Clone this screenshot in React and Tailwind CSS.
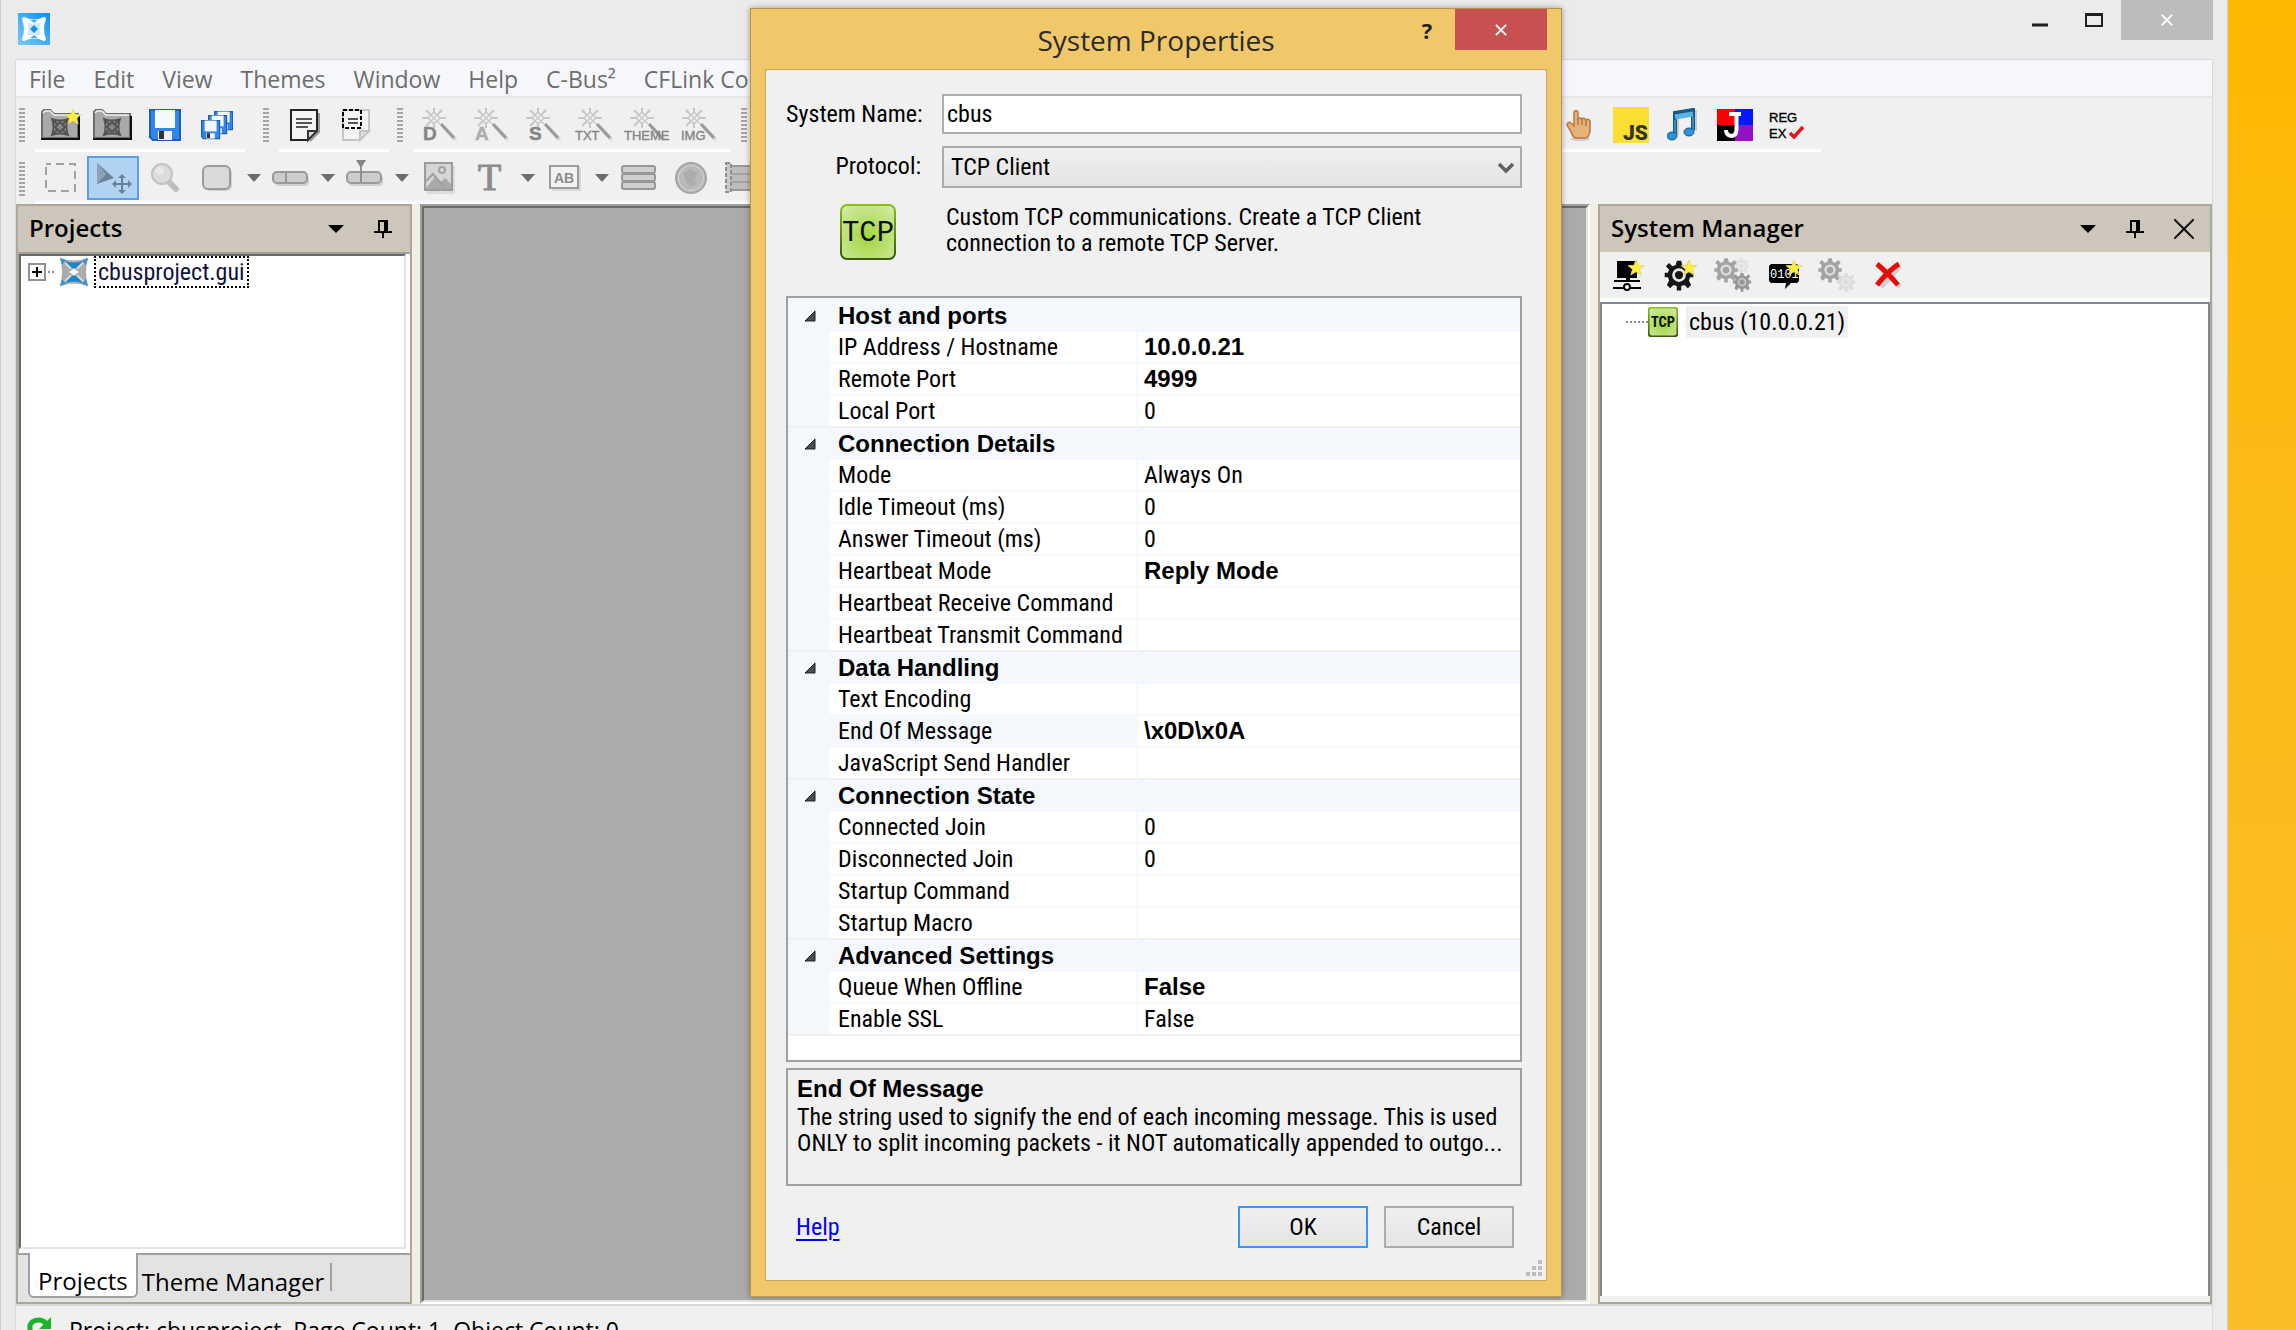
import React, { useState } from "react";

const STAR = "M0 -8 L2.2 -2.6 L8 -2.4 L3.5 1.3 L5.2 7 L0 3.8 L-5.2 7 L-3.5 1.3 L-8 -2.4 L-2.2 -2.6 Z";

const SECTIONS = [
  {
    title: "Host and ports",
    rows: [
      { name: "IP Address / Hostname", value: "10.0.0.21", changed: true },
      { name: "Remote Port", value: "4999", changed: true },
      { name: "Local Port", value: "0" },
    ],
  },
  {
    title: "Connection Details",
    rows: [
      { name: "Mode", value: "Always On" },
      { name: "Idle Timeout (ms)", value: "0" },
      { name: "Answer Timeout (ms)", value: "0" },
      { name: "Heartbeat Mode", value: "Reply Mode", changed: true },
      { name: "Heartbeat Receive Command", value: "" },
      { name: "Heartbeat Transmit Command", value: "" },
    ],
  },
  {
    title: "Data Handling",
    rows: [
      { name: "Text Encoding", value: "" },
      { name: "End Of Message", value: "\\x0D\\x0A", changed: true, selected: true },
      { name: "JavaScript Send Handler", value: "" },
    ],
  },
  {
    title: "Connection State",
    rows: [
      { name: "Connected Join", value: "0" },
      { name: "Disconnected Join", value: "0" },
      { name: "Startup Command", value: "" },
      { name: "Startup Macro", value: "" },
    ],
  },
  {
    title: "Advanced Settings",
    rows: [
      { name: "Queue When Offline", value: "False", changed: true },
      { name: "Enable SSL", value: "False" },
    ],
  },
];

/* ── Icons ── */

const Star = ({ x, y }) => <path d={STAR} transform={`translate(${x} ${y})`} fill="#fdf03c" stroke="#e0d66a" strokeWidth="0.8" />;

const Knot = () => (
  <g fill="none" stroke="#515151" strokeWidth="1.8">
    <path d="M1 1 Q9 4 17 1 Q14 9 17 17 Q9 14 1 17 Q4 9 1 1 Z" fill="#868686" />
    <path d="M2 2 L6 6 M12 12 L16 16 M16 2 L12 6 M6 12 L2 16" />
    <path d="M9 4 L14 9 L9 14 L4 9 Z" />
  </g>
);

const AppLogo = () => (
  <svg viewBox="0 0 32 32" className="size-8">
    <defs>
      <linearGradient id="logoBg" x1="1" y1="0" x2="0" y2="1">
        <stop offset="0" stopColor="#0a8ff5" />
        <stop offset="1" stopColor="#7cc8fb" />
      </linearGradient>
    </defs>
    <rect width="32" height="32" fill="url(#logoBg)" />
    <path d="M6 6 Q16 11 26 6 Q22 16 26 26 Q16 21 6 26 Q10 16 6 6 Z" fill="#cfeaff" stroke="#fff" strokeWidth="4" strokeLinejoin="round" />
    <path d="M12 7 L16 10 L20 7 Z M12 25 L16 22 L20 25 Z" fill="#4db0f7" />
    <path d="M16 12 L20 16 L16 20 L12 16 Z" fill="#1b8fe8" />
  </svg>
);

const ProjectLogo = () => (
  <svg viewBox="0 0 28 28" className="size-7 shrink-0">
    <path d="M0 0 Q14 5 28 0 Q24 14 28 28 Q14 23 0 28 Q4 14 0 0 Z" fill="#a9abad" />
    <path d="M5 3 Q14 6 23 3 L15 11 H13 Z M5 25 Q14 22 23 25 L15 17 H13 Z" fill="#1c86d1" />
    <path d="M0 0 L6 2 L2 7 Z M28 0 L22 2 L26 7 Z M0 28 L6 26 L2 21 Z M28 28 L22 26 L26 21 Z" fill="#3a95d6" />
    <path d="M5 5 L11 11 M23 5 L17 11 M5 23 L11 17 M23 23 L17 17" stroke="#dfe7ee" strokeWidth="1.5" />
    <path d="M14 10 L16 12 L19 14 L16 16 L14 18 L12 16 L9 14 L12 12 Z" fill="#fff" />
  </svg>
);

const FolderIcon = ({ star }) => (
  <svg viewBox="0 0 40 34" className="h-[34px] w-10">
    <path d="M1 30 V4 L3 2 H9 L13 6 H37 V30 Z" fill="#a9a9a9" stroke="#6c6c6c" strokeWidth="2" />
    <path d="M2 5 L4 3 H9 L13 7 H36" fill="none" stroke="#f3f3f3" strokeWidth="1.5" />
    <path d="M0 31 H39 M38 8 V31" stroke="#111" strokeWidth="2" />
    <g transform="translate(10 10)">
      <Knot />
    </g>
    {star && <Star x={32} y={9} />}
  </svg>
);

const Floppy = ({ x = 0, y = 0, s = 1 }) => (
  <g transform={`translate(${x} ${y}) scale(${s})`}>
    <path d="M1 1 H31 V31 H4 L1 28 Z" fill="#2e86ee" stroke="#1f5fae" strokeWidth="2" />
    <rect x="6" y="1" width="20" height="18" fill="#f4f8fd" />
    <rect x="9" y="22" width="14" height="9" fill="#f2f2f2" />
    <rect x="10" y="22" width="5" height="8" fill="#333" />
  </g>
);

const SaveIcon = () => (
  <svg viewBox="0 0 32 32" className="size-8">
    <Floppy />
  </svg>
);

const SaveAllIcon = () => (
  <svg viewBox="0 0 32 32" className="size-8">
    <Floppy x={13} y={2} s={0.6} />
    <Floppy x={7} y={6} s={0.6} />
    <Floppy x={0} y={11} s={0.6} />
  </svg>
);

const PageIcon = ({ dashed }) => (
  <svg viewBox="0 0 34 36" className="h-9 w-[34px]">
    <path
      d="M3 3 H29 V24 L20 33 H3 Z"
      fill="#f4f4f4"
      stroke={dashed ? "#c4c4c4" : "#222"}
      strokeWidth="2"
    />
    <path d="M29 24 H20 V33 Z" fill="#ddd" stroke={dashed ? "#c4c4c4" : "#333"} strokeWidth="2" />
    {!dashed && <path d="M31 6 V25 L22 34" fill="none" stroke="#999" strokeWidth="2" />}
    <path d={dashed ? "M8 12 H18 M8 16 H18" : "M8 12 H24 M8 16 H24 M8 20 H20"} stroke="#555" strokeWidth="2" />
    {dashed && <rect x="3" y="3" width="18" height="18" fill="none" stroke="#000" strokeWidth="2" strokeDasharray="4 2" />}
  </svg>
);

const WandIcon = ({ label, x, big, light }) => (
  <svg viewBox="0 0 52 40" className="h-10 w-[52px]">
    <path
      d="M21 3 V9 M21 17 V23 M9 13 H15 M27 13 H33 M13 5 L17 9 M25 9 L29 5 M13 21 L17 17"
      stroke="#c6c6c6"
      strokeWidth="2"
    />
    <path d="M15 7 L27 19 M27 7 L15 19 M21 7 L27 13 L21 19 L15 13 Z" fill="none" stroke="#c9c9c9" strokeWidth="1.5" />
    <path d="M30 21 L43 35" stroke="#dcdcdc" strokeWidth="4" />
    <path d="M28 19 L41 33" stroke="#999" strokeWidth="3" />
    <text
      x={x}
      y="35"
      fontFamily="Liberation Sans, sans-serif"
      fontSize={big ? 19 : 13}
      fontWeight={big ? 700 : 400}
      fill={light ? "#adadad" : "#858585"}
      stroke={light ? "#adadad" : "#858585"}
      strokeWidth="0.4"
    >
      {label}
    </text>
  </svg>
);

const HandIcon = () => (
  <svg viewBox="0 0 26 34" className="h-[34px] w-[26px]">
    <ellipse cx="14" cy="31" rx="10" ry="2" fill="#cfcfcf" />
    <path
      d="M8 18 V4 Q10 1 12 4 V11 Q14 9 16 11 Q18 9 20 12 Q22 10 24 13 V23 Q23 30 19 30 H9 Q6 28 5 24 L1 17 Q2 13 5 15 Z"
      fill="#e6b27a"
      stroke="#b5783f"
      strokeWidth="1.5"
    />
    <path d="M12 11 V17 M16 11 V17 M20 12 V18" stroke="#b5783f" strokeWidth="1.5" />
  </svg>
);

const JsIcon = () => (
  <svg viewBox="0 0 36 36" className="size-9 overflow-visible">
    <rect width="36" height="36" fill="#fbdf30" />
    <text x="10" y="33" fontFamily="Roboto, sans-serif" fontSize="21" fontWeight="900" fill="#33332d">
      JS
    </text>
  </svg>
);

const MusicIcon = () => (
  <svg viewBox="0 0 32 34" className="h-[34px] w-8">
    <path d="M10 27 V7 L28 4 V23" fill="none" stroke="#c9c9c9" strokeWidth="4" />
    <path d="M8 26 V5 L26 2 V22" fill="none" stroke="#15598c" strokeWidth="4" />
    <path d="M8 9 L26 6" stroke="#58b2e4" strokeWidth="5" />
    <path d="M8 26 V12 M26 22 V9" stroke="#3d9bd4" strokeWidth="1.5" />
    <ellipse cx="5" cy="28" rx="5" ry="4" fill="#2b93d6" stroke="#14578a" />
    <ellipse cx="22" cy="24" rx="5" ry="4" fill="#2b93d6" stroke="#14578a" />
  </svg>
);

const JIcon = () => (
  <svg viewBox="0 0 36 32" className="h-8 w-9">
    <rect width="18" height="16" fill="#fb0006" />
    <rect x="18" width="18" height="16" fill="#0518fb" />
    <rect y="16" width="18" height="16" fill="#000" />
    <rect x="18" y="16" width="18" height="16" fill="#9312c4" />
    <path d="M12 5 H24 M19.500 5 V21 Q19 27 14 27 Q9 26 9 21" fill="none" stroke="#fff" strokeWidth="4" />
  </svg>
);

const RegexIcon = () => (
  <svg viewBox="0 0 38 34" className="h-[34px] w-[38px]">
    <g fontFamily="Liberation Sans, sans-serif" fontSize="13" fill="#000" stroke="#000" strokeWidth="0.4">
      <text x="1" y="14">REG</text>
      <text x="1" y="30">EX</text>
    </g>
    <path d="M22 25 L26 29 L35 19" fill="none" stroke="#e8141c" strokeWidth="3.500" />
  </svg>
);

const MarqueeIcon = () => (
  <svg viewBox="0 0 32 30" className="h-[30px] w-8">
    <rect x="1" y="1" width="29" height="27" fill="none" stroke="#a2a2a2" strokeWidth="2" strokeDasharray="8 5" strokeDashoffset="3" />
  </svg>
);

const MoveIcon = () => (
  <svg viewBox="0 0 38 34" className="h-[34px] w-[38px]">
    <path d="M3 2 L20 17 L3 23 Z" fill="#6f8297" />
    <path d="M3 2 L12 13 L3 23 Z" fill="#8fa3b8" />
    <path d="M28 15 V31 M20 23 H36" stroke="#6b8098" strokeWidth="2" />
    <path d="M28 13 L24 17 H32 Z M28 33 L24 29 H32 Z M18 23 L22 19 V27 Z M38 23 L34 19 V27 Z" fill="#6b8098" />
  </svg>
);

const ZoomIcon = () => (
  <svg viewBox="0 0 32 32" className="size-8">
    <path d="M19 19 L27 27" stroke="#bdbdbd" strokeWidth="6" strokeLinecap="round" />
    <circle cx="13" cy="12" r="10" fill="#dcdcdc" stroke="#c2c2c2" strokeWidth="2" />
    <circle cx="11" cy="9" r="4" fill="#e8e8e8" />
  </svg>
);

const ShapeIcon = () => (
  <svg viewBox="0 0 34 30" className="h-[30px] w-[34px]">
    <rect x="5" y="5" width="27" height="23" rx="5" fill="#d0d0d0" />
    <rect x="3" y="3" width="27" height="23" rx="5" fill="#d9d9d9" stroke="#9b9b9b" strokeWidth="2" />
  </svg>
);

const SliderIcon = ({ pointer }) => (
  <svg viewBox="0 0 40 36" className="h-9 w-10">
    <rect x="4" y="15" width="34" height="11" rx="4" fill="#cfcfcf" />
    <rect x="2" y="12" width="34" height="11" rx="4" fill="#cccccc" stroke="#9a9a9a" strokeWidth="2" />
    {!pointer && <path d="M15 13 V22" stroke="#9a9a9a" strokeWidth="2" />}
    {pointer && <path d="M16 7 V22" stroke="#909090" strokeWidth="2" />}
    {pointer && <path d="M11 0 H21 L16 8 Z" fill="#858585" />}
  </svg>
);

const ImageIcon = () => (
  <svg viewBox="0 0 32 32" className="size-8">
    <rect x="4" y="4" width="28" height="28" fill="#dcdcdc" />
    <rect x="2" y="1" width="27" height="27" fill="#d6d6d6" stroke="#9c9c9c" strokeWidth="2" />
    <circle cx="19" cy="8" r="3" fill="none" stroke="#a2a2a2" strokeWidth="2" />
    <path d="M3 26 L12 15 L18 20 L22 16 L28 22 V27 H3 Z" fill="#aaaaaa" />
    <path d="M3 19 L10 12 L22 26" fill="none" stroke="#a0a0a0" strokeWidth="2" />
  </svg>
);

const TextIcon = () => (
  <svg viewBox="0 0 32 32" className="size-8 overflow-visible">
    <text x="3" y="28" fontFamily="Liberation Serif, serif" fontSize="38" fill="#8c8c8c" stroke="#8c8c8c" strokeWidth="1">
      T
    </text>
  </svg>
);

const InputIcon = () => (
  <svg viewBox="0 0 34 30" className="h-[30px] w-[34px]">
    <rect x="4" y="4" width="29" height="24" fill="#d8d8d8" />
    <rect x="2" y="3" width="28" height="22" fill="#f2f2f2" stroke="#9c9c9c" strokeWidth="2" />
    <text x="6" y="20" fontFamily="Liberation Sans, sans-serif" fontSize="14" fontWeight="700" fill="#8b8b8b">
      AB
    </text>
  </svg>
);

const ListIcon = () => (
  <svg viewBox="0 0 36 28" className="h-7 w-9">
    <g fill="#cfcfcf" stroke="#979797" strokeWidth="2">
      <rect x="1" y="2" width="33" height="7" rx="2" />
      <rect x="1" y="10" width="33" height="7" rx="2" />
      <rect x="1" y="18" width="33" height="7" rx="2" />
    </g>
  </svg>
);

const GlobeIcon = () => (
  <svg viewBox="0 0 34 34" className="size-[34px]">
    <circle cx="17" cy="17" r="15" fill="#bcbcbc" stroke="#a5a5a5" strokeWidth="2" />
    <circle cx="17" cy="17" r="12.500" fill="#bababa" stroke="#d3d3d3" />
    <path d="M9 12 L17 8 L24 13 L20 18 L23 23 L15 26 L12 19 Z" fill="#adadad" />
  </svg>
);

const FilmIcon = () => (
  <svg viewBox="0 0 36 32" className="h-8 w-9">
    <rect x="3" y="4" width="33" height="24" fill="#bdbdbd" stroke="#999" strokeWidth="2" />
    <path d="M4 12 H36 M4 20 H36" stroke="#a4a4a4" strokeWidth="2" />
    <rect x="1" y="1" width="5" height="29" fill="#c9c9c9" stroke="#8f8f8f" strokeWidth="2" strokeDasharray="4 2" />
  </svg>
);

const PinIcon = () => (
  <svg viewBox="0 0 18 18" className="h-[18px] w-[18px]">
    <path d="M5 11 V1 H13 V11 M11 1 V11 M0 12 H18 M9 12 V18" fill="none" stroke="#000" strokeWidth="2" />
  </svg>
);

const GEAR =
  "M-2 -13 H2 L3 -9 L6 -8 L9 -11 L12 -8 L9 -5 L10 -2 H13 V2 H10 L9 5 L11 9 L8 12 L5 9 L2 10 V14 H-2 V10 L-5 9 L-8 12 L-11 9 L-9 5 L-10 2 H-13 V-2 H-10 L-9 -5 L-12 -8 L-9 -11 L-6 -8 L-3 -9 Z";

const Gear = ({ x, y, s, color, hole }) => (
  <g transform={`translate(${x} ${y}) scale(${s})`}>
    <path d={GEAR} fill={color} />
    <circle r="5" fill={color} stroke={hole} strokeWidth="2.500" />
  </g>
);

const NewSystemIcon = () => (
  <svg viewBox="0 0 36 34" className="h-[34px] w-9">
    <path d="M6 3 H26 V20 H6 Z M15 20 H19 V24 H15 Z" fill="#000" />
    <path d="M3 23 H29 M2 30 H30" stroke="#000" strokeWidth="2" />
    <circle cx="16" cy="29" r="3" fill="#fff" stroke="#000" strokeWidth="2" />
    <Star x={25} y={10} />
  </svg>
);

const NewGearIcon = () => (
  <svg viewBox="0 0 36 34" className="h-[34px] w-9">
    <Gear x={16} y={17} s={1.1} color="#161616" hole="#e8e8e8" />
    <Star x={26} y={10} />
  </svg>
);

const GearsIcon = ({ faded }) => (
  <svg viewBox="0 0 40 34" className="h-[34px] w-10">
    {!faded && <Gear x={28} y={8} s={0.6} color="#e0e0e0" hole="#ececec" />}
    <Gear x={13} y={12} s={0.9} color="#a3a3a3" hole="#e0e0e0" />
    <Gear x={29} y={24} s={0.7} color={faded ? "#dcdcdc" : "#979797"} hole={faded ? "#e8e8e8" : "#c4c4c4"} />
  </svg>
);

const CommandIcon = () => (
  <svg viewBox="0 0 36 34" className="h-[34px] w-9">
    <path d="M4 6 H30 L32 8 V23 L30 25 H24 L18 31 L19 25 H4 L2 23 V8 Z" fill="#000" />
    <text x="3" y="20" fontFamily="Liberation Mono, monospace" fontSize="12" fill="#fff">
      0101
    </text>
    <Star x={27} y={10} />
  </svg>
);

const DeleteIcon = () => (
  <svg viewBox="0 0 32 30" className="h-[30px] w-8">
    <path d="M6 7 L27 27 M27 6 L8 27" stroke="#cfcfcf" strokeWidth="5" />
    <path d="M4 4 Q14 12 25 25 M26 4 Q16 10 4 25" fill="none" stroke="#e50b0b" strokeWidth="5" />
  </svg>
);

const TcpIcon = ({ large }) => (
  <svg viewBox="0 0 56 56" className={large ? "size-14" : "size-[30px] shrink-0"}>
    <defs>
      <radialGradient id="tcpGreen" cx="0.5" cy="0.6" r="0.7">
        <stop offset="0" stopColor="#a3d63f" />
        <stop offset="1" stopColor="#cfeaa0" />
      </radialGradient>
      <linearGradient id="tcpEdge" x1="0" y1="0" x2="0" y2="1">
        <stop offset="0" stopColor="#8bbf18" />
        <stop offset="1" stopColor="#3d5a12" />
      </linearGradient>
    </defs>
    <rect x="1" y="1" width="54" height="54" rx="6" fill="url(#tcpGreen)" stroke="url(#tcpEdge)" strokeWidth={large ? 2 : 4} />
    <text
      x="28"
      y="37"
      textAnchor="middle"
      fontFamily={large ? "Liberation Mono, monospace" : "Roboto Condensed, Liberation Sans, sans-serif"}
      fontSize={large ? 29 : 27}
      fontWeight={large ? 400 : 700}
      fill="#0c1204"
    >
      TCP
    </text>
  </svg>
);

const CloseGlyph = () => (
  <svg viewBox="0 0 14 14" className="size-3">
    <path d="M1 1 L13 13 M13 1 L1 13" stroke="currentColor" strokeWidth="2.200" />
  </svg>
);

/* ── Toolbar pieces ── */

const Grip = () => (
  <div
    aria-hidden="true"
    className="mt-2.5 mr-2.5 h-[34px] w-1.5 shrink-0 bg-[repeating-linear-gradient(to_bottom,#a5a5a5_0_2px,transparent_2px_4px)]"
  />
);

const Strip = ({ className = "", children }) => (
  <div className={`flex h-full shrink-0 border-b-2 border-white shadow-[inset_0_-2px_0_#f3f6fb] ${className}`}>{children}</div>
);

const ToolButton = ({ label, compact, children }) => (
  <button
    type="button"
    aria-label={label}
    className={`flex w-[52px] shrink-0 items-center justify-center ${compact ? "h-[46px]" : "h-[50px] pt-1"}`}
  >
    {children}
  </button>
);

const EditButton = ({ label, selected, children }) => (
  <button
    type="button"
    aria-label={label}
    className={`mt-1 flex h-11 w-[52px] shrink-0 items-center justify-center ${
      selected ? "border-2 border-[#5c9fe4] bg-[#b1d2f3]" : ""
    }`}
  >
    {children}
  </button>
);

const DropArrow = ({ label }) => (
  <button type="button" aria-label={label} className="mt-1 flex h-11 w-[22px] shrink-0 items-center justify-center">
    <svg viewBox="0 0 14 8" className="h-2 w-3.5">
      <path d="M0 0 H14 L7 8 Z" fill="#6b6b70" />
    </svg>
  </button>
);

const PanelHeader = ({ title, closable }) => (
  <div className={`flex h-[46px] shrink-0 items-center bg-[#cdc6ba] pl-[11px] ${closable ? "pr-4" : "pr-[18px]"}`}>
    <h2 className="flex-1 pb-0.5 font-['Open_Sans',sans-serif] text-[24px] leading-[32px] font-semibold text-black">{title}</h2>
    <div className="flex items-center gap-[30px]">
      <button type="button" aria-label={`${title} menu`}>
        <svg viewBox="0 0 16 8" className="h-2 w-4">
          <path d="M0 0 H16 L8 8 Z" fill="#000" />
        </svg>
      </button>
      <button type="button" aria-label={`Pin ${title}`}>
        <PinIcon />
      </button>
      {closable && (
        <button type="button" aria-label={`Close ${title}`}>
          <svg viewBox="0 0 20 20" className="size-5">
            <path d="M0 0 L20 20 M20 0 L0 20" stroke="#111" strokeWidth="2" />
          </svg>
        </button>
      )}
    </div>
  </div>
);

const MenuBar = () => (
  <nav className="flex h-[38px] shrink-0 items-center gap-7 border-b-2 border-[#e6e7e9] bg-[#f5f7fa] pt-0.5 pl-[13px] font-['Open_Sans',sans-serif] text-[23px] leading-[32px] whitespace-nowrap text-[#6d6d6d]">
    {["File", "Edit", "View", "Themes", "Window", "Help", "C-Bus²", "CFLink Commands"].map((item) => (
      <button key={item} type="button">
        {item}
      </button>
    ))}
  </nav>
);

const Toolbars = () => (
  <div className="shrink-0 pl-[3px]">
    <div className="flex h-[54px]">
      <Grip />
      <Strip className="mr-[18px] w-[210px]">
        <ToolButton label="New project"><FolderIcon star /></ToolButton>
        <ToolButton label="Open project"><FolderIcon /></ToolButton>
        <ToolButton label="Save"><SaveIcon /></ToolButton>
        <ToolButton label="Save all"><SaveAllIcon /></ToolButton>
      </Strip>
      <Grip />
      <Strip className="mr-2 w-[110px]">
        <ToolButton label="New page"><PageIcon /></ToolButton>
        <ToolButton label="New subpage"><PageIcon dashed /></ToolButton>
      </Strip>
      <Grip />
      <Strip className="mr-2.5 w-[318px]">
        <ToolButton label="Digital join wand"><WandIcon label="D" x={10} big /></ToolButton>
        <ToolButton label="Analog join wand"><WandIcon label="A" x={10} big light /></ToolButton>
        <ToolButton label="Serial join wand"><WandIcon label="S" x={12} big /></ToolButton>
        <ToolButton label="Text wand"><WandIcon label="TXT" x={6} /></ToolButton>
        <ToolButton label="Theme wand"><WandIcon label="THEME" x={3} /></ToolButton>
        <ToolButton label="Image wand"><WandIcon label="IMG" x={8} /></ToolButton>
      </Strip>
      <Grip />
      <Strip className="w-[1064px] justify-end pr-2">
        <ToolButton label="Gestures"><HandIcon /></ToolButton>
        <ToolButton label="Scripts"><JsIcon /></ToolButton>
        <ToolButton label="Sounds"><MusicIcon /></ToolButton>
        <ToolButton label="Joins"><JIcon /></ToolButton>
        <ToolButton label="Regex tester"><RegexIcon /></ToolButton>
      </Strip>
    </div>
    <div className="flex h-[52px]">
      <Grip />
      <Strip className="w-[1064px]">
        <EditButton label="Select"><MarqueeIcon /></EditButton>
        <EditButton label="Move" selected><MoveIcon /></EditButton>
        <EditButton label="Zoom"><ZoomIcon /></EditButton>
        <EditButton label="Button"><ShapeIcon /></EditButton>
        <DropArrow label="Button options" />
        <EditButton label="Gauge"><SliderIcon /></EditButton>
        <DropArrow label="Gauge options" />
        <EditButton label="Slider"><SliderIcon pointer /></EditButton>
        <DropArrow label="Slider options" />
        <EditButton label="Image"><ImageIcon /></EditButton>
        <EditButton label="Text"><TextIcon /></EditButton>
        <DropArrow label="Text options" />
        <EditButton label="Input field"><InputIcon /></EditButton>
        <DropArrow label="Input field options" />
        <EditButton label="List"><ListIcon /></EditButton>
        <EditButton label="Web"><GlobeIcon /></EditButton>
        <EditButton label="Video"><FilmIcon /></EditButton>
      </Strip>
    </div>
  </div>
);

/* ── Side panels ── */

const ProjectsPanel = () => (
  <section className="flex w-[396px] shrink-0 flex-col border-2 border-[#aca899] bg-white">
    <PanelHeader title="Projects" />
    <div className="flex-1 border-t-2 border-l border-[#a0a0a0] pr-1 pb-1">
      <div className="h-full border-2 border-t-[#696969] border-r-[#e3e3e3] border-b-[#e3e3e3] border-l-[#696969] pl-[7px]">
        <div className="flex h-8 items-center">
          <button type="button" aria-label="Expand cbusproject.gui" className="shrink-0">
            <svg viewBox="0 0 18 18" className="size-[18px]">
              <rect x="1" y="1" width="16" height="16" fill="#fff" stroke="#919191" strokeWidth="2" />
              <path d="M4 9 H14 M9 4 V14" stroke="#000" strokeWidth="2" />
            </svg>
          </button>
          <div className="mr-1.5 ml-0.5 w-1.5 border-t-2 border-dotted border-[#8c8c8c]" />
          <ProjectLogo />
          <span className="ml-1.5 h-8 border-2 border-dotted border-black px-0.5 font-['Roboto_Condensed','Liberation_Sans',sans-serif] text-[24px] leading-[28px] text-[#101040]">
            cbusproject.gui
          </span>
        </div>
      </div>
    </div>
    <div className="flex h-[49px] shrink-0 items-start border-t-2 border-[#a0a0a0] bg-[#e3e3e3] pl-2.5 font-['Open_Sans',sans-serif] text-[24px] leading-[32px] text-black">
      <button
        type="button"
        className="-mt-0.5 h-[45px] rounded-b-md border-x-2 border-b-2 border-[#a0a0a0] bg-white px-2 pt-3"
      >
        Projects
      </button>
      <button type="button" className="h-[43px] px-1 pt-2.5 whitespace-nowrap">
        Theme Manager
      </button>
      <div className="mt-2 ml-0.5 h-7 w-0.5 bg-[#a0a0a0]" />
    </div>
  </section>
);

const SystemManagerPanel = () => (
  <section className="flex w-[614px] shrink-0 flex-col border-2 border-[#aca899] bg-[#f0f0f0]">
    <PanelHeader title="System Manager" closable />
    <div className="flex h-[50px] shrink-0 items-start border-b-4 border-[#fafbfe] pl-[3px]">
      <ToolButton compact label="Add system"><NewSystemIcon /></ToolButton>
      <ToolButton compact label="Add command"><NewGearIcon /></ToolButton>
      <ToolButton compact label="Duplicate commands"><GearsIcon /></ToolButton>
      <ToolButton compact label="Add feedback"><CommandIcon /></ToolButton>
      <ToolButton compact label="Add macro"><GearsIcon faded /></ToolButton>
      <ToolButton compact label="Delete"><DeleteIcon /></ToolButton>
    </div>
    <div className="mb-1.5 flex-1 border-x-2 border-t-2 border-[#828790] bg-white pt-0.5">
      <div className="flex items-center pl-6">
        <div className="w-[22px] border-t-2 border-dotted border-[#8c8c8c]" />
        <TcpIcon />
        <span className="ml-2 h-8 bg-[#f0f0f0] px-[3px] font-['Roboto_Condensed','Liberation_Sans',sans-serif] text-[24px] leading-[32px] text-black">
          cbus (10.0.0.21)
        </span>
      </div>
    </div>
  </section>
);

/* ── Dialog ── */

const PropertyGrid = () => (
  <div className="h-[766px] border-2 border-[#a0a0a0] bg-white">
    <table className="w-full table-fixed border-separate border-spacing-0 border-t-2 border-[#f4f7fc] text-left">
      <colgroup>
        <col className="w-[42px]" />
        <col className="w-[308px]" />
        <col />
      </colgroup>
      {SECTIONS.map((section) => (
        <tbody key={section.title}>
          <tr className="h-8 bg-[#f4f7fc]">
            <td className="p-0 pl-4">
              <button type="button" aria-label={`Collapse ${section.title}`} className="block">
                <svg viewBox="0 0 12 12" className="size-3">
                  <path d="M11 1 V11 H1 Z" fill="#4d4d4d" stroke="#222" />
                </svg>
              </button>
            </td>
            <th colSpan={2} className="p-0 pl-2 font-['Liberation_Sans',sans-serif] text-[24px] leading-[30px] font-bold">
              {section.title}
            </th>
          </tr>
          {section.rows.map((row, i) => {
            const edge = i === section.rows.length - 1 ? "border-b-[#f0f0f0]" : "border-b-[#f4f7fc]";
            return (
              <tr key={row.name} className="h-8">
                <td className={`border-b-2 bg-[#f4f7fc] p-0 ${edge}`} />
                <th
                  scope="row"
                  className={`border-r-2 border-b-2 border-r-[#f4f7fc] p-0 pl-2 leading-[30px] font-normal whitespace-nowrap ${edge} ${
                    row.selected ? "bg-[#f4f7fc]" : ""
                  }`}
                >
                  {row.name}
                </th>
                <td
                  className={`border-b-2 p-0 pl-1.5 leading-[30px] ${edge} ${
                    row.changed ? "font-['Liberation_Sans',sans-serif] font-bold" : ""
                  }`}
                >
                  {row.value}
                </td>
              </tr>
            );
          })}
        </tbody>
      ))}
    </table>
  </div>
);

const SystemPropertiesDialog = () => {
  const [name, setName] = useState("cbus");

  return (
    <div
      role="dialog"
      aria-label="System Properties"
      className="absolute top-2 left-[750px] w-[812px] border border-[#b8954a] bg-[#f0c869] px-3.5 pb-[15px] text-black shadow-[0_0_6px_rgba(0,0,0,0.35)]"
    >
      <div className="relative flex h-[60px] items-center justify-center">
        <h1 className="pt-0.5 font-['Open_Sans',sans-serif] text-[28px] leading-[40px] text-[#2b2b2b]">System Properties</h1>
        <div className="absolute top-0 right-0 flex items-center">
          <button type="button" aria-label="Context help" className="w-14 text-center font-['Open_Sans',sans-serif] text-[22px] leading-[40px] font-bold text-[#222]">
            ?
          </button>
          <button type="button" aria-label="Close dialog" className="flex h-[41px] w-[92px] items-center justify-center bg-[#c75050] text-white">
            <CloseGlyph />
          </button>
        </div>
      </div>

      <div className="relative border border-[#c9a557] bg-[#f0f0f0] pt-6 pr-6 pl-5 font-['Roboto_Condensed','Liberation_Sans',sans-serif] text-[24px] leading-[26px]">
        <div className="grid grid-cols-[135px_1fr] gap-x-[21px]">
          <label htmlFor="system-name" className="text-right leading-[40px] whitespace-nowrap">
            System Name:
          </label>
          <input
            id="system-name"
            type="text"
            value={name}
            onChange={(e) => setName(e.target.value)}
            className="mb-3 h-10 border-2 border-[#abadb3] bg-white px-[3px] outline-none"
          />
          <label htmlFor="protocol" className="text-right leading-[40px]">
            Protocol:
          </label>
          <div className="relative">
            <select
              id="protocol"
              defaultValue="TCP Client"
              className="h-[42px] w-full appearance-none border-2 border-[#acacac] bg-linear-to-b from-[#f0f0f0] to-[#e4e4e4] px-[7px] outline-none"
            >
              <option>TCP Client</option>
            </select>
            <svg viewBox="0 0 16 12" className="pointer-events-none absolute top-4 right-2 h-3 w-4">
              <path d="M1 2 L8 9 L15 2" fill="none" stroke="#606060" strokeWidth="3.500" />
            </svg>
          </div>
          <div className="mt-4 flex justify-end pr-[25px]">
            <TcpIcon large />
          </div>
          <p className="mt-4 mb-9 pl-1">
            Custom TCP communications. Create a TCP Client
            <br />
            connection to a remote TCP Server.
          </p>
        </div>

        <div className="mt-1">
          <PropertyGrid />
        </div>

        <div className="mt-1.5 h-[118px] border-2 border-[#a0a0a0] pt-1 pl-[9px]">
          <h3 className="font-['Liberation_Sans',sans-serif] leading-[30px] font-bold">End Of Message</h3>
          <p className="whitespace-nowrap">
            The string used to signify the end of each incoming message. This is used
            <br />
            ONLY to split incoming packets - it NOT automatically appended to outgo...
          </p>
        </div>

        <div className="flex h-[94px] items-start gap-4 pt-5 pr-2 pl-2.5">
          <a href="#help" className="mr-auto leading-[42px] text-[#0000ff] underline decoration-2 underline-offset-4">
            Help
          </a>
          <button type="button" className="h-[42px] w-[130px] border-2 border-[#3399ff] bg-linear-to-b from-[#f0f0f0] to-[#e5e5e5]">
            OK
          </button>
          <button type="button" className="h-[42px] w-[130px] border-2 border-[#acacac] bg-linear-to-b from-[#f0f0f0] to-[#e5e5e5]">
            Cancel
          </button>
        </div>

        <svg viewBox="0 0 16 16" className="absolute right-1 bottom-1 size-4">
          <path d="M12 0 h4 v4 h-4 Z M6 6 h4 v4 h-4 Z M12 6 h4 v4 h-4 Z M0 12 h4 v4 h-4 Z M6 12 h4 v4 h-4 Z M12 12 h4 v4 h-4 Z" fill="#bdbdbd" />
        </svg>
      </div>
    </div>
  );
};

const App = () => (
  <div className="relative h-screen overflow-hidden bg-linear-to-b from-[#fdb900] to-[#f9be28] pr-[68px]">
    <div className="flex h-[calc(100vh+24px)] flex-col border-x border-[#cfcfcf] bg-[#ebebeb] pr-[14px] pl-[14px]">
      {/* ── Title bar ── */}
      <header className="flex h-[59px] shrink-0 items-start">
        <div className="mt-[13px] ml-[3px] flex-1">
          <AppLogo />
        </div>
        <button type="button" aria-label="Minimize" className="flex h-10 w-[54px] items-center justify-center">
          <svg viewBox="0 0 16 16" className="size-4">
            <path d="M0 13 H16" stroke="#1f1f1f" strokeWidth="3" />
          </svg>
        </button>
        <button type="button" aria-label="Maximize" className="flex h-10 w-[54px] items-center justify-center">
          <svg viewBox="0 0 18 14" className="h-3.5 w-[18px]">
            <path d="M1 1 H17 V13 H1 Z M0 2 H18" fill="none" stroke="#1f1f1f" strokeWidth="2" />
          </svg>
        </button>
        <button type="button" aria-label="Close" className="flex h-10 w-[92px] items-center justify-center bg-[#bcbcbc] text-white">
          <CloseGlyph />
        </button>
      </header>

      <div className="flex min-h-0 flex-1 flex-col border border-b-0 border-[#d9dadc] bg-[#f0f0f0]">
        <MenuBar />
        <Toolbars />

        <main className="flex min-h-0 flex-1">
          <ProjectsPanel />
          <div className="w-2 bg-[#f2eee5]" />
          <div className="flex min-w-0 flex-1 border-2 border-t-[#a0a0a0] border-r-white border-b-white border-l-[#a0a0a0]">
            <div className="flex-1 border-2 border-t-[#696969] border-r-[#e3e3e3] border-b-[#e3e3e3] border-l-[#696969] bg-[#ababab]" />
          </div>
          <div className="w-2 bg-[#f2eee5]" />
          <SystemManagerPanel />
        </main>

        {/* ── Status bar ── */}
        <footer className="flex h-[50px] shrink-0 items-center gap-[18px] border-t-2 border-[#d7d7d7] pl-[11px] font-['Open_Sans',sans-serif] text-[23px] leading-[32px] text-black">
          <svg viewBox="0 0 24 28" className="h-7 w-6">
            <path d="M3 16 V9 Q5 4 12 4 Q17 4 20 9" fill="none" stroke="#18b52c" strokeWidth="5" />
            <path d="M24 1 V13 H12 Z" fill="#18b52c" />
            <path d="M21 16 Q19 24 12 24 Q6 24 4 20" fill="none" stroke="#18b52c" strokeWidth="5" />
          </svg>
          <p className="whitespace-pre">Project: cbusproject  Page Count: 1  Object Count: 0</p>
        </footer>
      </div>
    </div>

    <SystemPropertiesDialog />
  </div>
);

export default App;
